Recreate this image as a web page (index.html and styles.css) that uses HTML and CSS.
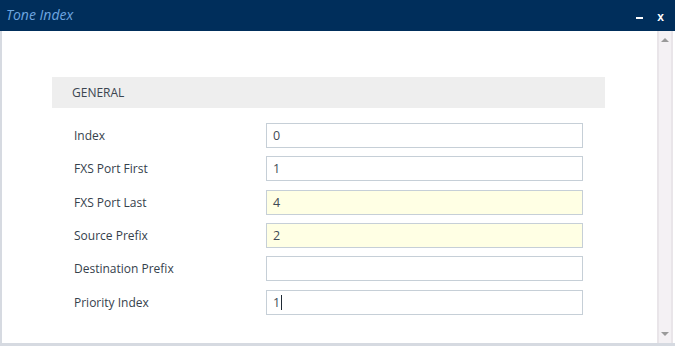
FILE: index.html
```html
<!DOCTYPE html>
<html lang="en">
<head>
  <meta charset="UTF-8">
  <title>Tone Index</title>
  <link rel="stylesheet" href="styles.css">
</head>
<body>
  <div class="window">
    <div class="titlebar">
      <span class="title">Tone Index</span>
      <div class="win-buttons">
        <span class="btn-min"></span>
        <span class="btn-close">x</span>
      </div>
    </div>

    <div class="frame">
      <div class="content">
        <div class="section-head">GENERAL</div>

        <div class="form">
          <div class="row">
            <label>Index</label>
            <div class="field">0</div>
          </div>
          <div class="row">
            <label>FXS Port First</label>
            <div class="field">1</div>
          </div>
          <div class="row">
            <label>FXS Port Last</label>
            <div class="field changed">4</div>
          </div>
          <div class="row">
            <label>Source Prefix</label>
            <div class="field changed">2</div>
          </div>
          <div class="row">
            <label>Destination Prefix</label>
            <div class="field"></div>
          </div>
          <div class="row">
            <label>Priority Index</label>
            <div class="field">1<span class="caret"></span></div>
          </div>
        </div>
      </div>

      <div class="scrollbar">
        <span class="arrow-up"></span>
        <span class="arrow-down"></span>
      </div>
    </div>
  </div>
</body>
</html>
```

FILE: styles.css
```css
body {
  margin: 0;
  padding: 0;
  background: #fff;
  font-family: 'Open Sans', 'Noto Sans', sans-serif;
  overflow: hidden;
}
.window {
  width: 675px;
  height: 349px;
  display: flex;
  flex-direction: column;
}
.titlebar {
  height: 31px;
  background-color: #002e5b;
  display: flex;
  align-items: center;
  justify-content: space-between;
  padding-left: 6px;
  box-sizing: border-box;
}
.title {
  font-size: 14px;
  font-style: italic;
  color: #6ea6e0;
  margin-top: -3px;
}
.win-buttons {
  display: flex;
  align-items: center;
  gap: 14px;
  margin-right: 11px;
  margin-top: 2px;
}
.btn-min {
  width: 7px;
  height: 2px;
  background: #fff;
  margin-top: 2px;
}
.btn-close {
  color: #fff;
  font-family: 'Liberation Sans', sans-serif;
  font-weight: bold;
  font-size: 12px;
  line-height: 12px;
}
.frame {
  height: 315px;
  display: flex;
  border-left: 2px solid #d6dae1;
  border-bottom: 3px solid #d6dae1;
  box-sizing: border-box;
}
.content {
  flex: 1;
  padding: 46px 0 0 50px;
}
.section-head {
  width: 553px;
  height: 31px;
  line-height: 31px;
  background-color: #eeeeee;
  padding-left: 20px;
  box-sizing: border-box;
  font-size: 12px;
  color: #3b4550;
}
.form {
  margin-top: 15px;
  padding-left: 22px;
}
.row {
  display: flex;
  align-items: center;
  height: 25px;
  margin-bottom: 8.33px;
}
.row label {
  width: 192px;
  font-size: 12px;
  color: #35414c;
}
.field {
  width: 317px;
  height: 25px;
  border: 1px solid #c6cfd7;
  box-sizing: border-box;
  background: #fff;
  padding-left: 6px;
  font-size: 12.5px;
  line-height: 23px;
  color: #3f4a55;
  display: flex;
  align-items: center;
}
.field.changed {
  background-color: #ffffe4;
}
.caret {
  display: inline-block;
  width: 1px;
  height: 15px;
  background: #1f2a35;
  margin-left: 1px;
}
.scrollbar {
  width: 16px;
  margin-right: 2px;
  background: #f4f1f4;
  border-left: 2px solid #e9e5e9;
  border-right: 2px solid #e9e5e9;
  box-sizing: border-box;
  display: flex;
  flex-direction: column;
  justify-content: space-between;
  align-items: center;
  padding: 7px 0 7px;
}
.arrow-up {
  width: 0;
  height: 0;
  border-left: 4px solid transparent;
  border-right: 4px solid transparent;
  border-bottom: 4px solid #9a9a9a;
}
.arrow-down {
  width: 0;
  height: 0;
  border-left: 4px solid transparent;
  border-right: 4px solid transparent;
  border-top: 4px solid #9a9a9a;
}
```
